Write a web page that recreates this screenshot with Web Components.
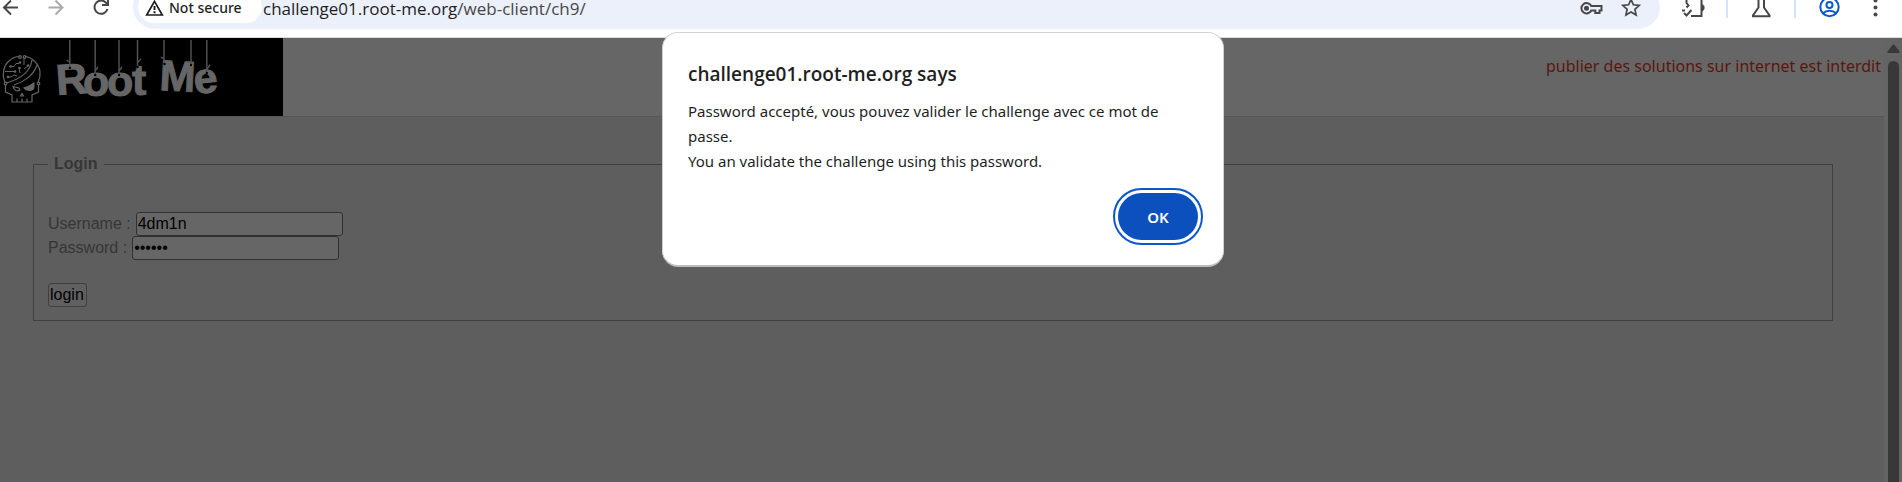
<!DOCTYPE html>
<html lang="fr">
<head>
<meta charset="utf-8">
<title>challenge01.root-me.org/web-client/ch9/</title>
<style>
  html, body { margin: 0; min-height: 100%; background: #5e5e5e; }
  body { min-height: 100vh; display: flex; font-family: "Noto Sans", "Open Sans", sans-serif; }
</style>
</head>
<body>
<browser-window></browser-window>

<template id="t-window">
  <style>
    :host { flex: 1; display: flex; flex-direction: column; position: relative; min-width: 0; }
    .view { flex: 1; display: flex; }
    page-content { flex: 1; min-width: 0; }
    .modal { position: absolute; top: 32px; left: 0; right: 16px; display: flex; justify-content: center; }
  </style>
  <browser-toolbar></browser-toolbar>
  <div class="view">
    <page-content></page-content>
    <scroll-bar></scroll-bar>
  </div>
  <div class="modal">
    <alert-dialog>
      <span slot="title">challenge01.root-me.org says</span>
      Password accepté, vous pouvez valider le challenge avec ce mot de passe.<br>You an validate the challenge using this password.
    </alert-dialog>
  </div>
</template>

<template id="t-toolbar">
  <style>
    :host { display: flow-root; background: #fff; border-bottom: 1px solid #dcdcdc; padding-bottom: 8px; }
    .row { display: flex; align-items: center; height: 44px; margin-top: -15px; }
    nav { display: flex; margin: 0 10px 0 -12px; }
    tool-button { width: 45px; color: #474747; }
    .off { color: #ababab; }
    .pill { flex: 1; min-width: 0; height: 44px; display: flex; align-items: center; background: #ebf0fa; border-radius: 22px; padding: 0 10px 0 5px; box-sizing: border-box; }
    .chip { display: flex; align-items: center; gap: 5px; width: 124px; height: 32px; box-sizing: border-box; padding: 2px 0 0 7px; border: 0; border-radius: 16px; background: #fff; color: #1f1f1f; font: 500 14px/18px "Noto Sans", sans-serif; white-space: nowrap; }
    .url { flex: 1; min-width: 0; font: 17px/22px "Open Sans", "Noto Sans", sans-serif; color: #1f1f1f; white-space: nowrap; padding: 4px 0 0 1px; outline: 0; }
    .url span { color: #474747; }
    .pill tool-button { width: 39px; }
    .end { display: flex; align-items: center; margin: 0 5px 0 11px; }
    .end tool-button { width: 44px; }
    .end i { width: 2px; height: 22px; margin: 0 11px; background: #d3e3fd; }
    .end .blue { color: #0b57d0; margin-right: 2px; }
    svg { display: block; fill: none; stroke: currentColor; stroke-width: 2; }
  </style>
  <div class="row">
    <nav>
      <tool-button label="Back"><svg width="24" height="24" viewBox="0 0 24 24"><path d="M19 12.500H5.500M12 5.500L5 12.500l7 7"/></svg></tool-button>
      <tool-button label="Forward" class="off"><svg width="24" height="24" viewBox="0 0 24 24"><path d="M4.500 12.500H18M11.500 5.500l7 7-7 7"/></svg></tool-button>
      <tool-button label="Reload"><svg width="24" height="24" viewBox="0 0 24 24"><path d="M18.500 14a6.600 6.600 0 1 1-1.500-6.300l2 2.300M19 4v6h-6"/></svg></tool-button>
    </nav>
    <div class="pill">
      <button class="chip"><svg width="19" height="18" viewBox="0 0 19 18"><path d="M9.500 2.300L17.300 16H1.700z" stroke-width="1.700"/><path d="M9.500 7v4M9.500 12.300v2"/></svg>Not secure</button>
      <div class="url" role="textbox" aria-label="Address" contenteditable="true" spellcheck="false">challenge01.root-me.org<span>/web-client/ch9/</span></div>
      <tool-button label="Passwords"><svg width="24" height="24" viewBox="2 0 24 24"><path d="M12.300 11a5.200 5.200 0 1 0 0 4.500h4v2.500h4.200v-2.500h2V11z" transform="translate(1 0)"/><circle cx="8.500" cy="13.200" r="2.500" fill="currentColor" stroke="none"/></svg></tool-button>
      <tool-button label="Bookmark"><svg width="24" height="24" viewBox="0 0 24 24" ><path stroke-width="1.700" d="M12 4.500l2.400 5.300 5.800.6-4.300 3.900 1.200 5.700-5.100-2.900L6.900 20l1.200-5.700-4.300-3.900 5.800-.6z"/></svg></tool-button>
    </div>
    <div class="end">
      <tool-button label="Extensions"><svg width="26" height="24" viewBox="0 0 26 24"><path d="M5.500 4h16v17H11M6.500 4v4l2 2.500-2 2"/><path d="M22 9.500h1l1.500 2v2.500l-1.500 2h-1z" fill="currentColor" stroke="none"/><path d="M2 15.500l3 0M4 18l2.500 2.500 5-5.500"/></svg></tool-button>
      <i></i>
      <tool-button label="Labs"><svg width="24" height="24" viewBox="0 0 24 24"><path d="M6.500 4h11M9.500 4v8.500L4 20.300v.9h16.500v-.9L15 12.500V4"/></svg></tool-button>
      <i></i>
      <tool-button label="Profile" class="blue"><svg width="24" height="24" viewBox="0 0 24 24"><circle cx="12.500" cy="12" r="9.200"/><circle cx="12.500" cy="10" r="3"/><path d="M6 18.300c3.500-3.300 9.500-3.300 13 0"/></svg></tool-button>
      <tool-button label="Menu"><svg width="24" height="24" viewBox="0 0 24 24" ><g fill="currentColor" stroke="none"><circle cx="12.500" cy="5.500" r="2"/><circle cx="12.500" cy="12.500" r="2"/><circle cx="12.500" cy="19.500" r="2"/></g></svg></tool-button>
    </div>
  </div>
</template>

<template id="t-tool">
  <style>
    :host { display: flex; flex: none; }
    button { flex: 1; display: flex; justify-content: center; align-items: center; padding: 0; border: 0; background: none; color: inherit; }
  </style>
  <button><slot></slot></button>
</template>

<template id="t-page">
  <style>
    :host { display: block; background: #5e5e5e; }
    header { display: flex; justify-content: space-between; align-items: flex-start; background: #666; border-bottom: 1px solid #565656; }
    header > a { color: #5c160d; font-size: 16px; line-height: 24px; padding: 16px 3px 0 0; text-decoration: none; }
  </style>
  <header>
    <site-logo></site-logo>
    <a href="#">publier des solutions sur internet est interdit</a>
  </header>
  <login-form></login-form>
</template>

<template id="t-logo">
  <style>
    :host { display: block; background: #000; }
    a, svg { display: block; }
    text { font: bold 43px "Liberation Sans", Arial, sans-serif; fill: #666; stroke: #666; stroke-width: 1; }
  </style>
  <a href="#" aria-label="Root Me">
    <svg width="283" height="78" viewBox="0 38 283 78">
      <text x="57 83 107 132 150 159 195" y="95 96 96 95 95 90 94" rotate="-4 0 0 0 0 3 -6">Root Me</text>
      <g stroke="#555" stroke-width="1.400" fill="none">
        <path d="M69.800 40v27M95.200 40v34M119 40v34M137.500 40v26M164 40v23M191 40v24M206.800 40v32"/>
        <path d="M66.500 60l3 2M98 67l-3 4M122 67l-3 4M141 59l-3 3M161 57l3 2M188 61l3 3M210 65l-3 4"/>
      </g>
      <g stroke="#666" stroke-width="1.200" fill="none">
        <path d="M5 82C2 76 3 66 9 61c3-3 6-4 9.500-4.500M26 56.500c7 1.500 13 8 14 15 .5 4-.5 8-2 11"/>
        <circle cx="20" cy="57" r="1.300"/><circle cx="24.500" cy="57" r="1.300"/>
        <path d="M6 83C17 80 30 74 32 60M14 85c10-3 20-10 23-20"/>
        <circle cx="5.500" cy="83.500" r="1.300"/><circle cx="38.500" cy="83.500" r="1.300"/>
        <path d="M5.500 85v7l6.500 3v7h20v-7l6.500-3v-7"/>
        <path d="M17 102v-3.500M22 102v-3.500M27 102v-3.500"/>
        <path d="M13 86.500c1 4 4 5.500 7 3.500l-1-2z"/>
        <path d="M20.500 96l1.500-2.500 1.500 2.500z"/>
        <path stroke-width="1" d="M5 71.500h9M10 66.500h4l2-3h3M8 77h3l3-2 3 1M19 69l1 4M24 58v7M28 66l-4 3"/>
      </g>
      <path d="M23 87.500l5-1.500 6.500-4v4.500c0 3-2 4.500-5 4.500-2.500 0-5-1-6.500-3.500z" fill="#666"/>
      <g fill="#666"><circle cx="15" cy="71.500" r="1.300"/><circle cx="20" cy="62.500" r="1.300"/><circle cx="10.500" cy="66.500" r="1.300"/><circle cx="8" cy="77" r="1.300"/><circle cx="19.500" cy="68" r="1.300"/><circle cx="28" cy="65.500" r="1.300"/></g>
      <g fill="#000"><circle cx="69.800" cy="68" r="1.200"/><circle cx="95.200" cy="75" r="1.200"/><circle cx="119" cy="75" r="1.200"/><circle cx="137.500" cy="67" r="1.200"/><circle cx="164.500" cy="64" r="1.200"/><circle cx="191" cy="65" r="1.200"/><circle cx="206.800" cy="73" r="1.200"/></g>
    </svg>
  </a>
</template>

<template id="t-login">
  <style>
    :host { display: block; margin: 38px 51px 0 33px; font: 16px/24px "Liberation Sans", Arial, sans-serif; color: #363636; }
    fieldset { margin: 0; padding: 14px; padding-bottom: 13px; border: 1px solid #404040; }
    legend { font-weight: bold; line-height: 18px; padding: 0 6px; }
    form { display: flex; flex-direction: column; align-items: flex-start; padding-top: 25px; }
    .field { display: flex; gap: 5px; }
    input { box-sizing: border-box; width: 207px; height: 24px; margin: 0; padding: 1px 1px 2px; border: 1px solid #303030; border-radius: 3px; background: #666; color: #000; font: inherit; }
    button { box-sizing: border-box; height: 24px; margin: 23px 0 0; padding: 0 2px 0 1px; border: 1px solid #404040; border-radius: 3px; background: #606060; color: #000; font: 16px/20px "Liberation Sans", Arial, sans-serif; }
  </style>
  <fieldset>
    <legend>Login</legend>
    <form>
      <div class="field"><label for="user">Username :</label><input id="user" type="text" value="4dm1n"></div>
      <div class="field"><label for="pass">Password :</label><input id="pass" type="password" value="secret"></div>
      <button type="button">login</button>
    </form>
  </fieldset>
</template>

<template id="t-scroll">
  <style>
    :host { display: flex; flex-direction: column; align-items: center; gap: 8px; width: 18px; box-sizing: border-box; padding: 6px 0 0 1px; background: #646464; }
    svg { display: block; }
    div { flex: 1; width: 11px; border-radius: 6px 6px 0 0; background: #383838; }
  </style>
  <svg width="13" height="9" viewBox="0 0 13 9"><path d="M5.500 1q1-1 2 0l5 6.500q.5 1.500-1 1.500h-10q-1.500 0-1-1.500z" fill="#383838"/></svg>
  <div></div>
</template>

<template id="t-dialog">
  <style>
    :host { display: block; width: 562px; max-width: 100%; }
    section { box-sizing: border-box; border: 1px solid #d0d0d0; border-bottom: 2px solid #bdbdbd; border-radius: 16px; background: #fff; color: #1f1f1f; padding: 28px 25px 20px; display: flex; flex-direction: column; }
    h1 { margin: 0 0 12px; font: 600 19px/26px "Open Sans", "Noto Sans", sans-serif; }
    p { margin: 0; font-size: 15px; line-height: 25px; }
    button { align-self: flex-end; width: 80px; height: 47px; margin: 19px 0 5px; padding: 0; border: 0; border-radius: 24px; background: #0b50bd; color: #fff; font: 600 15px/20px "Noto Sans", sans-serif; outline: 2px solid #0b57d0; outline-offset: 3px; }
  </style>
  <section role="alertdialog" aria-labelledby="title">
    <h1 id="title"><slot name="title"></slot></h1>
    <p><slot></slot></p>
    <button>OK</button>
  </section>
</template>

<script>
  class TemplateElement extends HTMLElement {
    constructor() {
      super();
      const template = document.getElementById(this.constructor.template);
      this.attachShadow({ mode: 'open' }).append(template.content.cloneNode(true));
    }
  }
  class ToolButton extends TemplateElement {
    static template = 't-tool';
    connectedCallback() {
      this.shadowRoot.querySelector('button').setAttribute('aria-label', this.getAttribute('label'));
    }
  }
  customElements.define('tool-button', ToolButton);
  customElements.define('browser-toolbar', class extends TemplateElement { static template = 't-toolbar'; });
  customElements.define('site-logo', class extends TemplateElement { static template = 't-logo'; });
  customElements.define('login-form', class extends TemplateElement { static template = 't-login'; });
  customElements.define('page-content', class extends TemplateElement { static template = 't-page'; });
  customElements.define('scroll-bar', class extends TemplateElement { static template = 't-scroll'; });
  customElements.define('alert-dialog', class extends TemplateElement { static template = 't-dialog'; });
  customElements.define('browser-window', class extends TemplateElement { static template = 't-window'; });
</script>
</body>
</html>
